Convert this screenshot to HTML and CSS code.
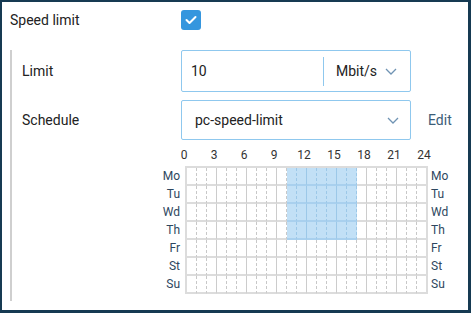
FILE: index.html
```html
<!DOCTYPE html>
<html lang="en">
<head>
    <meta charset="UTF-8">
    <meta name="viewport" content="width=device-width, initial-scale=1.0">
    <title>Speed limit</title>
    <link rel="stylesheet" href="styles.css">
</head>
<body>
    <div class="panel">
        <div class="toggle-row">
            <div class="main-label">Speed limit</div>
            <div class="checkbox">
                <svg width="12" height="10" viewBox="0 0 12 10">
                    <polyline points="1.5,5 4.5,8 10.5,2" fill="none" stroke="#fff" stroke-width="2" stroke-linecap="round" stroke-linejoin="round"/>
                </svg>
            </div>
        </div>
        <div class="group">
            <div class="field-row">
                <div class="field-label">Limit</div>
                <div class="input-box">
                    <div class="input-value">10</div>
                    <div class="unit">
                        <span>Mbit/s</span>
                        <svg class="chevron" width="12" height="7" viewBox="0 0 12 7">
                            <polyline points="1,1 6,6 11,1" fill="none" stroke="#6f93b3" stroke-width="1.3"/>
                        </svg>
                    </div>
                </div>
            </div>
            <div class="field-row schedule-row">
                <div class="field-label">Schedule</div>
                <div class="select-box">
                    <span>pc-speed-limit</span>
                    <svg class="chevron" width="12" height="7" viewBox="0 0 12 7">
                        <polyline points="1,1 6,6 11,1" fill="none" stroke="#6f93b3" stroke-width="1.3"/>
                    </svg>
                </div>
                <a class="edit-link">Edit</a>
            </div>
            <div class="schedule">
                <div class="days days-left" id="daysLeft"></div>
                <div class="chart-col">
                    <div class="hours" id="hours"></div>
                    <div class="chart" id="chart"></div>
                </div>
                <div class="days days-right" id="daysRight"></div>
            </div>
        </div>
    </div>

    <script>
        const days = ['Mo', 'Tu', 'Wd', 'Th', 'Fr', 'St', 'Su'];
        const daysLeft = document.getElementById('daysLeft');
        const daysRight = document.getElementById('daysRight');
        const hours = document.getElementById('hours');
        const chart = document.getElementById('chart');

        for (let h = 0; h <= 24; h += 3) {
            const el = document.createElement('div');
            el.className = 'hour';
            el.textContent = h;
            hours.appendChild(el);
        }

        days.forEach(function (d, i) {
            const l = document.createElement('div');
            l.className = 'day';
            l.textContent = d;
            daysLeft.appendChild(l);
            daysRight.appendChild(l.cloneNode(true));

            const row = document.createElement('div');
            row.className = 'chart-row';
            for (let h = 0; h < 24; h++) {
                const cell = document.createElement('div');
                cell.className = 'cell';
                if ((h + 1) % 3 === 0) cell.classList.add('major');
                // Mon-Thu, 10:00-17:00
                if (i < 4 && h >= 10 && h < 17) cell.classList.add('on');
                row.appendChild(cell);
            }
            chart.appendChild(row);
        });
    </script>
</body>
</html>
```

FILE: styles.css
```css
body, html {
    margin: 0;
    padding: 0;
    background: #163a52;
    font-family: Roboto, "Liberation Sans", sans-serif;
    color: #222;
}
.panel {
    width: 466px;
    height: 308px;
    margin: 2px 3px 3px 2px;
    padding: 8px 8px 0 8px;
    box-sizing: border-box;
    background: #fff;
}
.toggle-row {
    display: flex;
    align-items: center;
    height: 20px;
}
.main-label {
    width: 171px;
    font-size: 14px;
}
.checkbox {
    width: 20px;
    height: 20px;
    border-radius: 3px;
    background: #3596de;
    display: flex;
    justify-content: center;
    align-items: center;
}
.group {
    margin-top: 20px;
    height: 251px;
    border-left: 2px solid #cfcfcf;
    padding-left: 10px;
}
.field-row {
    display: flex;
    align-items: center;
}
.field-label {
    width: 159px;
    font-size: 14px;
}
.input-box {
    width: 230px;
    height: 42px;
    box-sizing: border-box;
    border: 1px solid #8fc8ee;
    border-radius: 2px;
    display: flex;
    align-items: center;
    font-size: 14px;
}
.input-value {
    flex: 1;
    padding-left: 9px;
}
.unit {
    width: 87px;
    height: 29px;
    box-sizing: border-box;
    border-left: 1px solid #8fc8ee;
    padding: 0 13px 0 12px;
    display: flex;
    align-items: center;
    justify-content: space-between;
}
.schedule-row {
    margin-top: 8px;
}
.select-box {
    width: 230px;
    height: 40px;
    box-sizing: border-box;
    border: 1px solid #8fc8ee;
    border-radius: 2px;
    padding: 0 11px 0 13px;
    display: flex;
    align-items: center;
    justify-content: space-between;
    font-size: 14px;
}
.edit-link {
    margin-left: 17px;
    font-size: 14px;
    color: #3c5d78;
    cursor: pointer;
}
.schedule {
    display: flex;
    margin-top: 8px;
}
.days {
    padding-top: 20px;
    font-size: 12px;
    color: #2e4760;
}
.days-left {
    width: 163px;
    box-sizing: border-box;
    padding-right: 5px;
    text-align: right;
}
.days-right {
    padding-left: 3px;
}
.day {
    height: 18px;
    line-height: 17px;
}
.chart-col {
    width: 243px;
}
.hours {
    display: flex;
    width: 270px;
    height: 18px;
    margin-left: -16px;
    font-size: 12px;
    color: #333;
    line-height: 14px;
}
.hour {
    width: 30px;
    text-align: center;
}
.chart {
    border-top: 2px solid #dcdcdc;
    border-left: 2px solid #dcdcdc;
}
.chart-row {
    display: flex;
}
.cell {
    width: 10px;
    height: 18px;
    box-sizing: border-box;
    border-right: 1px dashed #c8c8c8;
    border-bottom: 2px solid #dcdcdc;
}
.cell.major {
    border-right: 1px solid #cccccc;
}
.cell:last-child {
    width: 11px;
    border-right: 2px solid #dcdcdc;
}
.cell.on {
    background: #c2e0f6;
    border-right-color: #9cc8e8;
    border-bottom-color: #a9d0ee;
}
```
